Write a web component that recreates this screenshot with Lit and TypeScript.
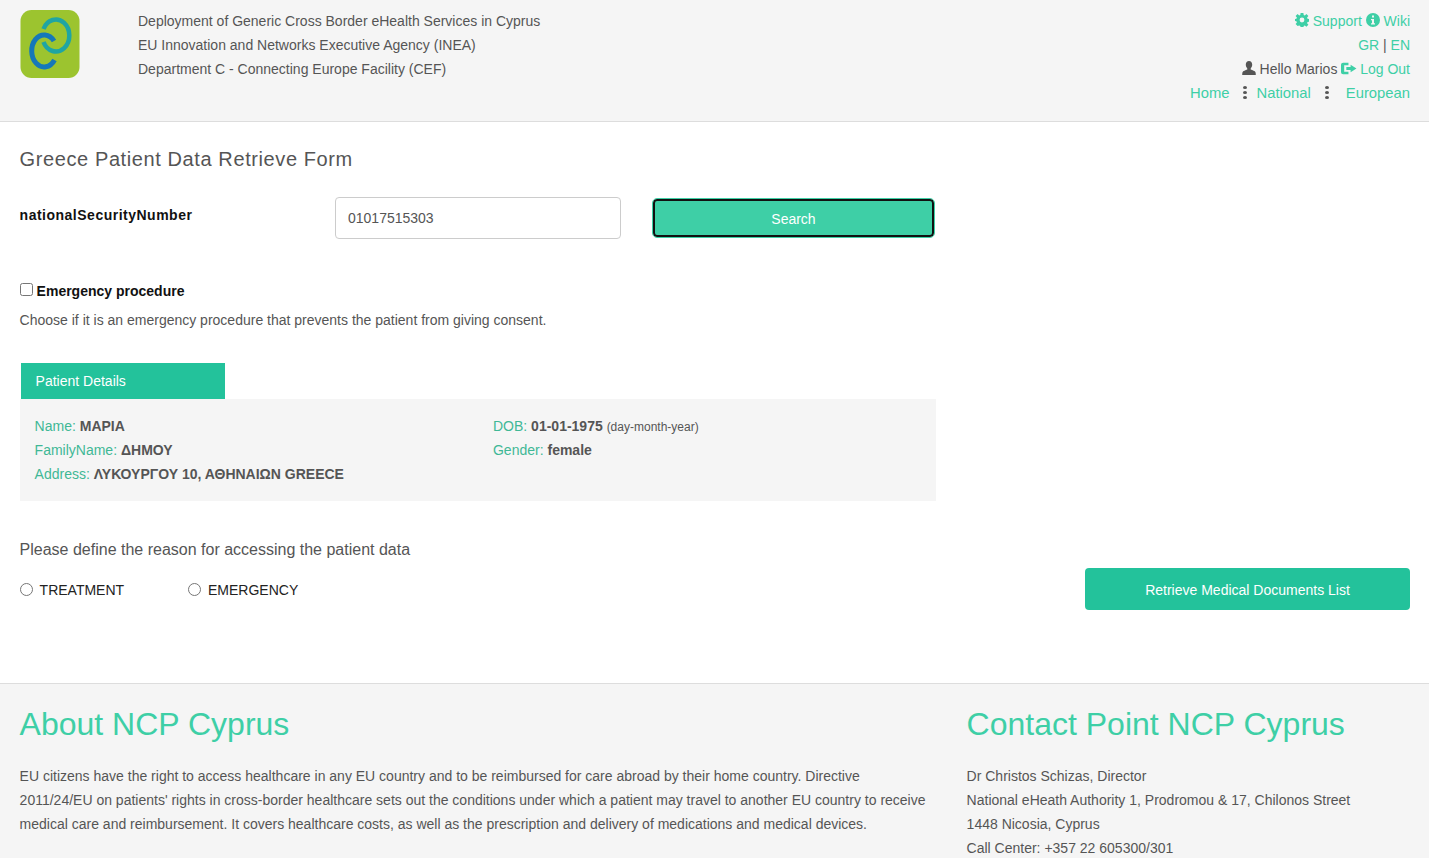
import { LitElement, html, css } from 'lit';
import { customElement } from 'lit/decorators.js';

const specks = [
  [4, 8], [9, 24], [6, 44], [14, 58], [27, 6], [40, 5], [50, 50], [55, 38], [47, 56], [36, 60], [52, 60], [20, 9], [31, 42], [57, 10], [12, 17],
  [3, 30], [8, 52], [22, 62], [42, 48], [56, 28], [44, 63], [29, 57], [15, 4], [54, 46]
];

@customElement('app-root')
export class AppRoot extends LitElement {
  static get styles() {
    return css`
      :host {
        display: block;
        height: 100vh;
        overflow: hidden;
        font-family: "Liberation Sans", Arial, sans-serif;
        font-size: 14px;
        line-height: 24px;
        color: #555;
        background: #fff;
      }
      a {
        color: #3ecfa6;
        text-decoration: none;
      }
      svg {
        display: inline-block;
        vertical-align: -1px;
      }
      .header {
        display: flex;
        height: 112px;
        padding: 9px 19px 0 20px;
        background: #f5f5f5;
        border-bottom: 1px solid #ddd;
      }
      .logo {
        display: block;
        width: 60px;
        height: 68px;
        margin-top: 1px;
        margin-right: 58px;
      }
      .org {
        flex: 1;
      }
      .links {
        text-align: right;
        color: #555;
      }
      .logout {
        margin-right: -1px;
      }
      .nav {
        display: flex;
        justify-content: flex-end;
        font-size: 14.8px;
      }
      .sep {
        display: flex;
        flex-direction: column;
        justify-content: center;
        gap: 2px;
        align-items: center;
        width: 4px;
        height: 22px;
      }
      .sep i {
        width: 4px;
        height: 3px;
        border-radius: 50%;
        background: #555;
      }
      .sep.first {
        margin: 0 10px 0 13px;
      }
      .sep.second {
        margin: 0 17px 0 14px;
      }
      .main {
        padding: 0 19px 0 19.6px;
        height: 561px;
      }
      h1 {
        margin: 0;
        padding-top: 24px;
        font-size: 20px;
        line-height: 26px;
        font-weight: 400;
        letter-spacing: 0.6px;
      }
      .search {
        display: flex;
        width: 916px;
        margin-top: 25px;
        height: 42px;
      }
      .search label {
        width: 315.4px;
        padding-top: 6px;
        font-weight: 700;
        color: #111;
        letter-spacing: 0.5px;
      }
      .search input {
        width: 286px;
        height: 42px;
        box-sizing: border-box;
        padding: 0 12px;
        border: 1px solid #ccc;
        border-radius: 4px;
        font: inherit;
        color: #555;
      }
      .search button {
        width: 281px;
        height: 38px;
        margin: 2px 0 0 32px;
        padding: 1px 0 0;
        box-sizing: border-box;
        background: #3ecfa6;
        color: #fff;
        border: 2px solid #111;
        border-radius: 4px;
        outline: 1px solid #3ecfa6;
        font: inherit;
      }
      .emergency {
        margin-top: 40px;
        font-weight: 700;
        color: #111;
        display: flex;
        align-items: center;
      }
      .emergency input {
        margin: 0 4px 3px 0;
        width: 13px;
        height: 13px;
      }
      .hint {
        margin-top: 5px;
      }
      .tab {
        width: 205.6px;
        height: 36px;
        margin-top: 31px;
        box-sizing: border-box;
        padding-left: 15px;
        background: #23c29b;
        border-left: 1px solid #fff;
        color: #fff;
        line-height: 36px;
      }
      .details {
        display: grid;
        grid-template-columns: 458.4px 1fr;
        width: 916px;
        box-sizing: border-box;
        padding: 15px;
        background: #f5f5f5;
      }
      .details span {
        color: #3fb896;
      }
      .details small {
        font-size: 12px;
        line-height: 1;
      }
      h2 {
        margin: 37px 0 0;
        font-size: 16px;
        line-height: 24px;
        font-weight: 400;
      }
      .reason {
        display: flex;
        align-items: center;
        justify-content: space-between;
        margin-top: 6px;
        height: 42px;
      }
      .radios {
        display: flex;
        margin-top: 2px;
        color: #222;
      }
      .radios label {
        display: flex;
        align-items: center;
      }
      .radios label:first-child {
        width: 168.4px;
      }
      .radios input {
        margin: 0 7px 2px 0;
        width: 13px;
        height: 13px;
      }
      .retrieve {
        width: 325px;
        height: 42px;
        padding: 2px 0 0;
        border: none;
        border-radius: 4px;
        background: #23c29b;
        color: #fff;
        font: inherit;
      }
      .footer {
        display: flex;
        height: 175px;
        padding: 0 19px 0 19.6px;
        background: #f5f5f5;
        border-top: 1px solid #ddd;
      }
      .about {
        width: 947px;
        flex: none;
      }
      .about p {
        margin: 0;
        width: 915px;
      }
      .footer h3 {
        margin: 20px 0;
        font-size: 32px;
        line-height: 40px;
        font-weight: 400;
        color: #3ecfa6;
      }
    `;
  }

  logo() {
    return html`<svg class="logo" viewBox="0 0 60 68">
      <rect x="0.5" y="0" width="59" height="68" rx="11" fill="#9cc42f"></rect>
      ${specks.map(([x, y]) => html`<circle cx=${x} cy=${y} r="0.7" fill="#dfeaa0"></circle>`)}
      <path d="M23.500 19A13.500 16 0 1 1 23.500 32" fill="none" stroke="#1fa5a3" stroke-width="4.500"></path>
      <path d="M34 31A12.500 16 0 1 0 34.500 50" fill="none" stroke="#1678b8" stroke-width="5"></path>
    </svg>`;
  }

  render() {
    return html`
      <div class="header">
        ${this.logo()}
        <div class="org">
          <div>Deployment of Generic Cross Border eHealth Services in Cyprus</div>
          <div>EU Innovation and Networks Executive Agency (INEA)</div>
          <div>Department C - Connecting Europe Facility (CEF)</div>
        </div>
        <div class="links">
          <div>
            <a href="#"><svg width="14" height="14" viewBox="0 0 14 14"><path fill="currentColor" fill-rule="evenodd" d="M5.600 0h2.800l.3 1.900 1.100.5L11.400 1l2 2-1.300 1.600.4 1.100 1.900.3v2.800l-1.900.3-.4 1.100 1.300 1.600-2 2-1.600-1.300-1.100.4-.3 1.900H5.600l-.3-1.900-1.100-.4L2.600 13l-2-2 1.300-1.600-.5-1.100L0 8V6l1.400-.3.5-1.100L.6 3l2-2 1.600 1.400 1.100-.5zM7 4.600a2.400 2.400 0 1 0 0 4.800 2.400 2.400 0 0 0 0-4.800z"></path></svg> Support</a>
            <a href="#"><svg width="14" height="14" viewBox="0 0 14 14"><path fill="currentColor" fill-rule="evenodd" d="M7 0a7 7 0 1 1 0 14A7 7 0 0 1 7 0zM6 2.500v2h2v-2zM5 6v1.300h1v2.900H5V11.500h4V10.200H8V6z"></path></svg> Wiki</a>
          </div>
          <div><a href="#">GR</a> | <a href="#">EN</a></div>
          <div>
            <svg width="14" height="14" viewBox="0 0 14 14"><path fill="#555" d="M7 0c2 0 3.200 1.500 3.200 3.600 0 1.600-.6 3-1.500 3.800v1.200c1.800.7 4.300 1.500 4.800 2.600.2.600.3 1.500.3 2.800H.2c0-1.300.1-2.200.3-2.800.5-1.100 3-1.900 4.800-2.600V7.400C4.400 6.600 3.800 5.200 3.800 3.600 3.800 1.500 5 0 7 0z"></path></svg>
            Hello Marios
            <a href="#"><svg class="logout" width="16" height="13" viewBox="0 0 15 12"><path fill="currentColor" d="M2 .500h5V3H3v6h4v2.500H2a2 2 0 0 1-2-2v-7a2 2 0 0 1 2-2zM9 2.500 14.500 6 9 9.500v-2H5v-3h4z"></path></svg> Log Out</a>
          </div>
          <div class="nav">
            <a href="#">Home</a>
            <div class="sep first"><i></i><i></i><i></i></div>
            <a href="#">National</a>
            <div class="sep second"><i></i><i></i><i></i></div>
            <a href="#">European</a>
          </div>
        </div>
      </div>

      <div class="main">
        <h1>Greece Patient Data Retrieve Form</h1>
        <div class="search">
          <label>nationalSecurityNumber</label>
          <input type="text" value="01017515303" />
          <button>Search</button>
        </div>
        <div class="emergency"><input type="checkbox" /> Emergency procedure</div>
        <div class="hint">Choose if it is an emergency procedure that prevents the patient from giving consent.</div>
        <div class="tab">Patient Details</div>
        <div class="details">
          <div><span>Name:</span> <b>ΜΑΡΙΑ</b></div>
          <div><span>DOB:</span> <b>01-01-1975</b> <small>(day-month-year)</small></div>
          <div><span>FamilyName:</span> <b>ΔΗΜΟΥ</b></div>
          <div><span>Gender:</span> <b>female</b></div>
          <div><span>Address:</span> <b>ΛΥΚΟΥΡΓΟΥ 10, ΑΘΗΝΑΙΩΝ GREECE</b></div>
        </div>
        <h2>Please define the reason for accessing the patient data</h2>
        <div class="reason">
          <div class="radios">
            <label><input type="radio" name="reason" /> TREATMENT</label>
            <label><input type="radio" name="reason" /> EMERGENCY</label>
          </div>
          <button class="retrieve">Retrieve Medical Documents List</button>
        </div>
      </div>

      <div class="footer">
        <div class="about">
          <h3>About NCP Cyprus</h3>
          <p>EU citizens have the right to access healthcare in any EU country and to be reimbursed for care abroad by their home country. Directive 2011/24/EU on patients' rights in cross-border healthcare sets out the conditions under which a patient may travel to another EU country to receive medical care and reimbursement. It covers healthcare costs, as well as the prescription and delivery of medications and medical devices.</p>
        </div>
        <div>
          <h3>Contact Point NCP Cyprus</h3>
          <div>Dr Christos Schizas, Director</div>
          <div>National eHeath Authority 1, Prodromou &amp; 17, Chilonos Street</div>
          <div>1448 Nicosia, Cyprus</div>
          <div>Call Center: +357 22 605300/301</div>
        </div>
      </div>
    `;
  }
}
